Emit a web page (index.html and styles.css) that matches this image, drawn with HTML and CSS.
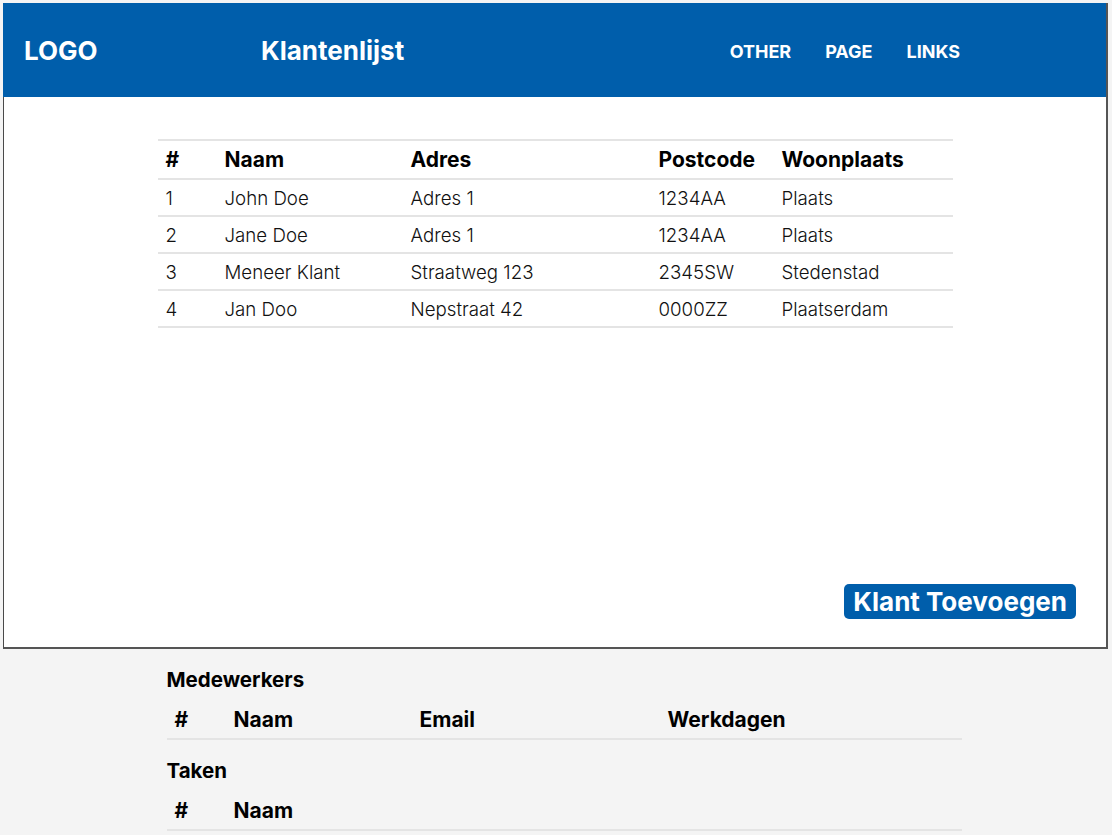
FILE: index.html
```html
<!DOCTYPE html>
<html lang="nl">
<head>
<meta charset="utf-8">
<title>Klantenlijst</title>
<link rel="stylesheet" href="styles.css">
</head>
<body>
<div class="panel">
  <header class="topbar">
    <div class="logo">LOGO</div>
    <h1 class="title">Klantenlijst</h1>
    <nav class="nav">
      <a href="#">OTHER</a>
      <a href="#">PAGE</a>
      <a href="#">LINKS</a>
    </nav>
  </header>
  <main class="main">
    <table class="grid clients">
      <thead>
        <tr><th class="c1">#</th><th class="c2">Naam</th><th class="c3">Adres</th><th class="c4">Postcode</th><th>Woonplaats</th></tr>
      </thead>
      <tbody>
        <tr><td>1</td><td>John Doe</td><td>Adres 1</td><td>1234AA</td><td>Plaats</td></tr>
        <tr><td>2</td><td>Jane Doe</td><td>Adres 1</td><td>1234AA</td><td>Plaats</td></tr>
        <tr><td>3</td><td>Meneer Klant</td><td>Straatweg 123</td><td>2345SW</td><td>Stedenstad</td></tr>
        <tr><td>4</td><td>Jan Doo</td><td>Nepstraat 42</td><td>0000ZZ</td><td>Plaatserdam</td></tr>
      </tbody>
    </table>
    <div class="actions">
      <button class="btn">Klant Toevoegen</button>
    </div>
  </main>
</div>
<section class="extra">
  <h2 class="sub">Medewerkers</h2>
  <table class="grid small">
    <thead>
      <tr><th class="c1">#</th><th class="c2">Naam</th><th class="c3">Email</th><th>Werkdagen</th></tr>
    </thead>
  </table>
  <h2 class="sub">Taken</h2>
  <table class="grid small">
    <thead>
      <tr><th class="c1">#</th><th>Naam</th></tr>
    </thead>
  </table>
</section>
</body>
</html>
```
FILE: styles.css
```css
* { box-sizing: border-box; }
html, body { margin: 0; padding: 0; }
body {
  background: #f4f4f4;
  font-family: Inter, "Liberation Sans", sans-serif;
  color: #000;
  padding-top: 3px;
}
.panel {
  margin: 0 4px 0 3px;
  height: 646px;
  background: #fff;
  border-left: 1px solid #4a4a4a;
  border-right: 2px solid #555;
  border-bottom: 2px solid #555;
  display: flex;
  flex-direction: column;
}
.topbar {
  height: 94px;
  background: #005eab;
  color: #fff;
  display: flex;
  align-items: center;
  padding: 2px 0 0 21px;
  margin-left: -1px;
}
.logo {
  width: 237px;
  font-size: 26px;
  font-weight: 700;
  line-height: 30px;
}
.title {
  margin: 0;
  font-size: 26px;
  font-weight: 700;
  line-height: 30px;
}
.nav {
  margin-left: auto;
  margin-right: 146px;
  display: flex;
  gap: 34px;
  padding-top: 2px;
}
.nav a {
  color: #fff;
  text-decoration: none;
  font-size: 18px;
  font-weight: 700;
  line-height: 24px;
}
.main {
  flex: 1;
  display: flex;
  flex-direction: column;
  padding-top: 42px;
}
.grid {
  border-collapse: collapse;
  width: 795px;
  table-layout: fixed;
}
.clients { margin: 0 auto; }
.grid th {
  text-align: left;
  font-size: 21px;
  font-weight: 700;
  line-height: 24px;
  padding: 7px 8px 6px;
}
.clients thead tr { border-top: 2px solid #e4e4e4; }
.grid thead tr { border-bottom: 2px solid #e4e4e4; }
.grid td {
  font-size: 18.7px;
  font-weight: 300;
  line-height: 22px;
  padding: 8px 8px 5px;
  color: #111;
}
.grid tbody tr { border-bottom: 2px solid #e4e4e4; }
.c1 { width: 59px; }
.c2 { width: 186px; }
.c3 { width: 248px; }
.c4 { width: 123px; }
.actions {
  margin-top: auto;
  display: flex;
  justify-content: flex-end;
  padding: 0 30px 28px 0;
}
.btn {
  background: #005eab;
  color: #fff;
  border: 0;
  border-radius: 5px;
  font-family: inherit;
  font-size: 26px;
  font-weight: 700;
  line-height: 35px;
  height: 35px;
  padding: 0 9px;
}
.extra {
  width: 811px;
  margin: 0 auto;
  padding: 19px 0 0 16px;
}
.sub {
  margin: 0;
  font-size: 20.5px;
  font-weight: 700;
  line-height: 24px;
}
.small { margin-top: 10px; margin-bottom: 19px; }
.small th { padding: 6px 8px 6px; }
.small:last-child { margin-bottom: 0; }
```
